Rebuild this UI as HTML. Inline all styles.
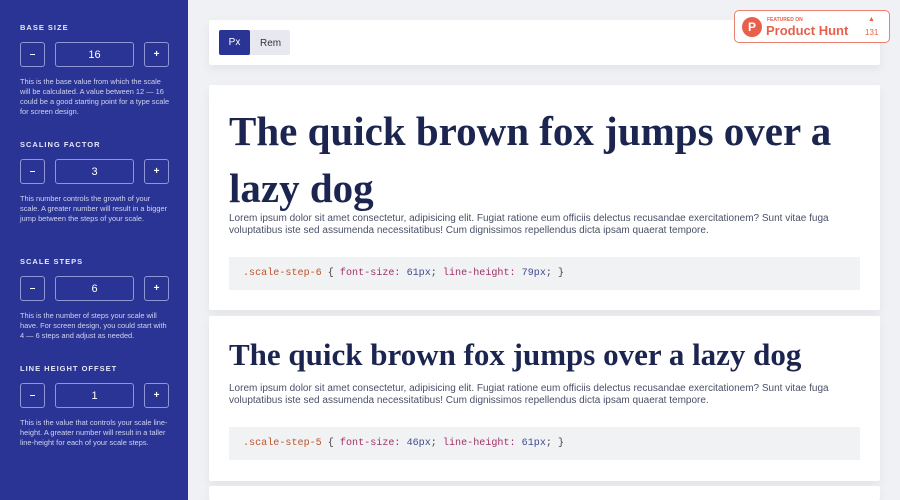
<!DOCTYPE html>
<html><head><meta charset="utf-8"><style>
*{box-sizing:border-box;margin:0;padding:0}
html,body{width:900px;height:500px;overflow:hidden}
body{background:#eff1f4;font-family:"Liberation Sans",sans-serif;position:relative}
.side{position:absolute;left:0;top:0;width:188px;height:500px;background:#2a3494;color:#dfe2f5;z-index:2}
.lbl{position:absolute;left:20px;font-size:7.5px;letter-spacing:1px;font-weight:bold;color:#e6e8f7}
.btn,.val{position:absolute;height:25px;border:1px solid #8f97d6;border-radius:3px;color:#fff;display:flex;align-items:center;justify-content:center;font-size:11px}
.btn{width:25px;font-size:10px;font-weight:bold}
.val{left:55px;width:79px}
.desc{position:absolute;left:20px;width:150px;font-size:7.4px;line-height:10px;color:#d0d4ee}
.card{position:absolute;left:209px;width:671px;background:#fff;border-radius:2px;box-shadow:0 4px 10px rgba(0,0,0,0.06);overflow:hidden}
h1{font-family:"Liberation Serif",serif;font-weight:bold;color:#1b2550;position:absolute;left:20px}
p{position:absolute;left:20px;width:622px;font-size:10px;line-height:12px;color:#4a5068}
.code{position:absolute;left:20px;width:631px;height:33px;background:#f1f2f4;font-family:"Liberation Mono",monospace;font-size:10.1px;padding-left:14px;line-height:33px;color:#444;white-space:pre}
.s{color:#c0552a}.k{color:#a0306a}.n{color:#3e4b90}
</style></head><body>
<div class="side">
<div class="lbl" style="top:23px">BASE SIZE</div>
<div class="btn" style="left:20px;top:42px">–</div><div class="val" style="top:42px">16</div><div class="btn" style="left:144px;top:42px">+</div>
<div class="desc" style="top:77px">This is the base value from which the scale will be calculated. A value between 12 — 16 could be a good starting point for a type scale for screen design.</div>
<div class="lbl" style="top:140px">SCALING FACTOR</div>
<div class="btn" style="left:20px;top:159px">–</div><div class="val" style="top:159px">3</div><div class="btn" style="left:144px;top:159px">+</div>
<div class="desc" style="top:194px">This number controls the growth of your scale. A greater number will result in a bigger jump between the steps of your scale.</div>
<div class="lbl" style="top:257px">SCALE STEPS</div>
<div class="btn" style="left:20px;top:276px">–</div><div class="val" style="top:276px">6</div><div class="btn" style="left:144px;top:276px">+</div>
<div class="desc" style="top:311px">This is the number of steps your scale will have. For screen design, you could start with 4 — 6 steps and adjust as needed.</div>
<div class="lbl" style="top:364px">LINE HEIGHT OFFSET</div>
<div class="btn" style="left:20px;top:383px">–</div><div class="val" style="top:383px">1</div><div class="btn" style="left:144px;top:383px">+</div>
<div class="desc" style="top:418px">This is the value that controls your scale line-height. A greater number will result in a taller line-height for each of your scale steps.</div>
</div>

<div class="card" style="top:20px;height:45px">
<div style="position:absolute;left:10px;top:10px;width:71px;height:25px;background:#e8e9f0;border-radius:2px"></div>
<div style="position:absolute;left:10px;top:10px;width:31px;height:25px;background:#2a3494;border-radius:2px;color:#fff;font-size:10px;display:flex;align-items:center;justify-content:center">Px</div>
<div style="position:absolute;left:51px;top:18px;font-size:10px;color:#333">Rem</div>
</div>
<div style="position:absolute;left:734px;top:10px;width:156px;height:33px;border:1px solid #e8816f;border-radius:5px;background:#fff">
<div style="position:absolute;left:7px;top:6px;width:20px;height:20px;border-radius:50%;background:#e8604b;color:#fff;font-weight:bold;font-size:12px;display:flex;align-items:center;justify-content:center">P</div>
<div style="position:absolute;left:32px;top:6px;font-size:5px;font-weight:bold;color:#e8604b">FEATURED ON</div>
<div style="position:absolute;left:31px;top:12px;font-size:13px;font-weight:bold;color:#e8604b">Product Hunt</div>
<div style="position:absolute;left:133px;top:5px;font-size:7px;color:#e8604b">▲</div>
<div style="position:absolute;left:130px;top:17px;font-size:8px;color:#e8604b">131</div>
</div>

<div class="card" style="top:85px;height:225px">
<h1 style="top:18px;font-size:41px;line-height:57px;width:630px">The quick brown fox jumps over a lazy dog</h1>
<p style="top:128px">Lorem ipsum dolor sit amet consectetur, adipisicing elit. Fugiat ratione eum officiis delectus recusandae exercitationem? Sunt vitae fuga voluptatibus iste sed assumenda necessitatibus! Cum dignissimos repellendus dicta ipsam quaerat tempore.</p>
<div class="code" style="top:172px"><span class="s">.scale-step-6</span> { <span class="k">font-size:</span> <span class="n">61px</span>; <span class="k">line-height:</span> <span class="n">79px</span>; }</div>
</div>

<div class="card" style="top:316px;height:165px">
<h1 style="top:19px;font-size:31px;line-height:40px;white-space:nowrap">The quick brown fox jumps over a lazy dog</h1>
<p style="top:67px">Lorem ipsum dolor sit amet consectetur, adipisicing elit. Fugiat ratione eum officiis delectus recusandae exercitationem? Sunt vitae fuga voluptatibus iste sed assumenda necessitatibus! Cum dignissimos repellendus dicta ipsam quaerat tempore.</p>
<div class="code" style="top:111px"><span class="s">.scale-step-5</span> { <span class="k">font-size:</span> <span class="n">46px</span>; <span class="k">line-height:</span> <span class="n">61px</span>; }</div>
</div>
<div class="card" style="top:486px;height:14px"></div>
</body></html>
